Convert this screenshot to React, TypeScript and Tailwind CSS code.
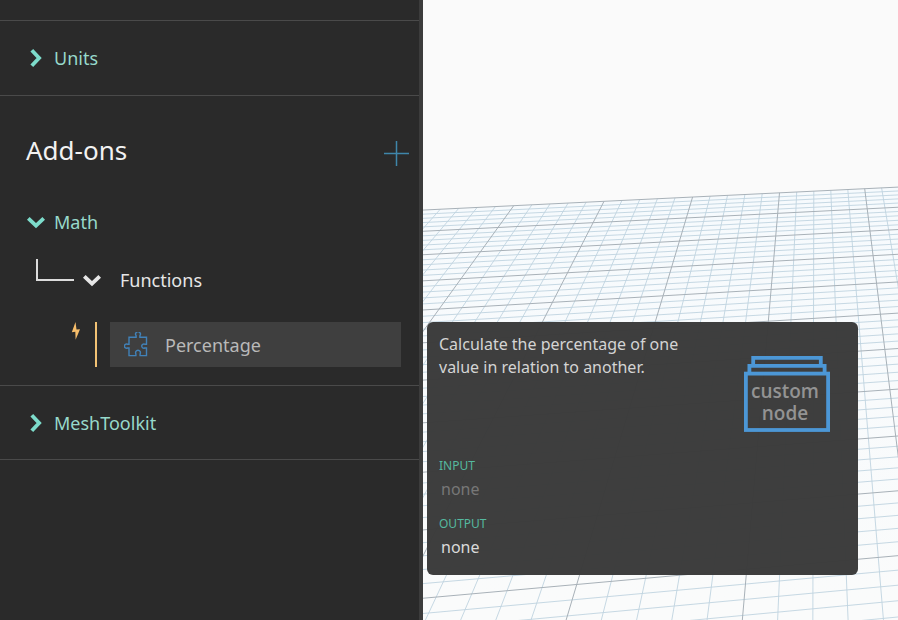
import React from "react";

const ORIGIN = { x: 513.7, y: 205.7 };
const MINOR_X = 20;
const MINOR_Y = 50;

function project(u: number, v: number): [number, number] {
  const s = u / MINOR_X;
  const t = v / MINOR_Y;
  const w = 1 + 0.03915 * s - 0.4964 * t;
  return [
    (ORIGIN.x + 384.9 * s - 404.4 * t) / w,
    (ORIGIN.y - 9.6 * s + 104.9 * t) / w,
  ];
}

function segment(u1: number, v1: number, u2: number, v2: number) {
  const [x1, y1] = project(u1, v1);
  const [x2, y2] = project(u2, v2);
  return `M${x1.toFixed(1)} ${y1.toFixed(1)}L${x2.toFixed(1)} ${y2.toFixed(1)}`;
}

const U_MIN = -30;
const U_MAX = 30;
const V_MAX = 60;

let minor = "";
let major = "";
for (let u = U_MIN; u <= U_MAX; u++) {
  const d = segment(u, 0, u, V_MAX);
  if (u % 5 === 0) major += d;
  else minor += d;
}
for (let v = 0; v <= V_MAX; v++) {
  const d = segment(U_MIN, v, U_MAX, v);
  if (v % 5 === 0) major += d;
  else minor += d;
}
const floor = [project(U_MIN, 0), project(U_MAX, 0), project(U_MAX, V_MAX), project(U_MIN, V_MAX)]
  .map((p) => p.join(","))
  .join(" ");

function GridFloor() {
  return (
    <svg
      className="block h-full w-full"
      viewBox="423 0 475 620"
      preserveAspectRatio="xMinYMin slice"
      aria-hidden="true"
    >
      <defs>
        <linearGradient id="floor" gradientUnits="userSpaceOnUse" x1="0" y1="190" x2="0" y2="600">
          <stop offset="0" stopColor="#f6fafd" />
          <stop offset="1" stopColor="#fafbfb" />
        </linearGradient>
      </defs>
      <polygon points={floor} fill="url(#floor)" />
      <path d={minor} stroke="#c0d4e0" strokeWidth="0.9" fill="none" />
      <path d={major} stroke="#a8b1b8" strokeWidth="1" fill="none" />
    </svg>
  );
}

function Chevron({ open = false }: { open?: boolean }) {
  return (
    <svg className="h-5 w-5 shrink-0" viewBox="0 0 20 20" fill="none" stroke="currentColor" strokeWidth="3.8" aria-hidden="true">
      <path d={open ? "M2.3 6.3L10 13.6L17.7 6.3" : "M5.8 2.3L13.1 10L5.8 17.7"} />
    </svg>
  );
}

function PuzzleIcon() {
  return (
    <svg className="h-[26px] w-[26px] shrink-0" viewBox="0 0 26 26" fill="none" stroke="#4182b9" strokeWidth="1.4" aria-hidden="true">
      <path d="M5 5.2H12.1V3.6A2.4 2.4 0 1 1 15.9 3.6V5.2H22.5V12.2H20.7A2.1 2.1 0 1 0 20.7 16H22.5V23.6H16.1V21.8A2.4 2.4 0 1 0 11.9 21.8V23.6H5V16H3.4A2.1 2.1 0 1 1 3.4 12.2H5Z" />
    </svg>
  );
}

function CustomNodeIcon() {
  return (
    <div className="relative shrink-0">
      <svg className="h-[76px] w-[86px]" viewBox="0 0 86 76" fill="none" stroke="#4c97d6" strokeWidth="3.8" aria-hidden="true">
        <path d="M9.2 10V1.9H76.8V10" />
        <path d="M5.4 18V9.9H80.6V18" />
        <rect x="1.9" y="17.6" width="82.2" height="56.4" />
      </svg>
      <p className="absolute inset-x-0 top-6 pr-1 text-center font-['Open_Sans',sans-serif] text-[19px] font-semibold leading-[22px] text-[#939393]">
        custom node
      </p>
    </div>
  );
}

function CategoryButton({ label, open = false }: { label: string; open?: boolean }) {
  return (
    <button type="button" aria-expanded={open} className="flex h-8 items-center gap-2 text-[18px] leading-8 text-[#97d9cb]">
      <span className="flex text-[#7ddccb]">
        <Chevron open={open} />
      </span>
      {label}
    </button>
  );
}

function Port({ title, muted = false }: { title: string; muted?: boolean }) {
  return (
    <div className="mb-3">
      <dt className="text-[12px] leading-6 text-[#55b89f]">{title}</dt>
      <dd className={`pl-0.5 text-[16px] leading-[22px] ${muted ? "text-[#777777]" : "text-[#dadada]"}`}>none</dd>
    </div>
  );
}

export default function App() {
  return (
    <div className="flex h-screen min-h-[600px] overflow-hidden bg-[#fafafa] font-['Noto_Sans',sans-serif]">
      <aside className="w-[423px] shrink-0 border-r-4 border-[#3c3c3c] bg-[#2a2a2a]">
        <div className="h-[21px] border-b border-[#4a4a4a]" />
        <div className="flex h-[75px] items-center border-b border-[#4a4a4a] pl-[26px]">
          <CategoryButton label="Units" />
        </div>

        <section className="border-b border-[#4a4a4a] pb-[18px] pl-[26px]">
          <header className="flex h-[110px] items-center justify-between pr-2">
            <h2 className="pb-0.5 text-[26px] leading-8 text-[#f2f2f2]">Add-ons</h2>
            <button type="button" aria-label="Add package" className="pt-1">
              <svg className="h-7 w-7" viewBox="0 0 28 28" stroke="#3f86aa" strokeWidth="1.5" aria-hidden="true">
                <path d="M1 14.5H26M13.5 2V27" />
              </svg>
            </button>
          </header>
          <CategoryButton label="Math" open />
          <div className="flex h-[84px] items-center pl-2.5">
            <svg className="mb-5 h-6 w-[38px]" viewBox="0 0 38 24" fill="none" stroke="#dcdcdc" strokeWidth="2" aria-hidden="true">
              <path d="M1 1V22H38" />
            </svg>
            <button type="button" aria-expanded="true" className="ml-2 flex items-center gap-[18px] text-[18px] leading-8 text-[#e6e6e6]">
              <Chevron open />
              Functions
            </button>
          </div>
          <div className="flex h-[45px] pr-[18px]">
            <div className="flex w-[71px] shrink-0 justify-end border-r-2 border-[#f2c274] pr-3.5">
              <svg className="h-[18px] w-2.5" viewBox="0 0 10 18" fill="#f6bd6a" aria-hidden="true">
                <path d="M4.5 0L0.8 10.3L4.3 9.8L4.6 17.8L9 7.2L5.5 7.6Z" />
              </svg>
            </div>
            <button type="button" className="ml-[13px] flex flex-1 items-center gap-[15px] bg-[#3f3f3f] pl-3.5 text-[18px] text-[#b9b9b9]">
              <PuzzleIcon />
              <span className="pt-0.5">Percentage</span>
            </button>
          </div>
        </section>

        <div className="flex h-[74px] items-center border-b border-[#4a4a4a] pl-[26px]">
          <CategoryButton label="MeshToolkit" />
        </div>
      </aside>

      <main className="relative min-w-0 flex-1">
        <GridFloor />
        <div role="tooltip" className="absolute left-1 right-10 top-[322px] rounded-md bg-[#3a3a3a]/98 pb-[5px] pl-3 pr-7 pt-[11px]">
          <div className="flex items-start justify-between">
            <p className="w-[260px] text-[16px] leading-[23px] text-[#d4d4d4]">
              Calculate the percentage of one value in relation to another.
            </p>
            <div className="pt-[23px]">
              <CustomNodeIcon />
            </div>
          </div>
          <dl className="pt-[22px]">
            <Port title="INPUT" muted />
            <Port title="OUTPUT" />
          </dl>
        </div>
      </main>
    </div>
  );
}
